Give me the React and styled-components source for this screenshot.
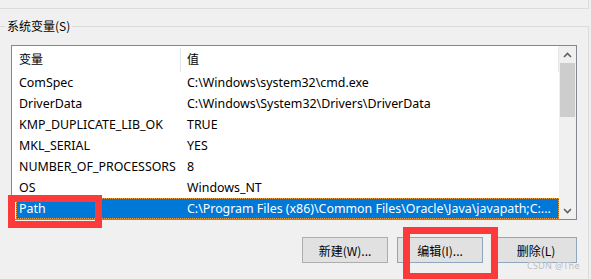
import React from "react";
import styled, { createGlobalStyle } from "styled-components";

const GlobalStyle = createGlobalStyle`
  html, body {
    margin: 0;
    padding: 0;
    background: #f0f0f0;
  }
  body {
    font-family: "Noto Sans", "Noto Sans CJK SC", sans-serif;
    font-size: 12px;
    color: #000;
  }
`;

const Page = styled.div`
  position: relative;
  width: 591px;
  height: 279px;
  overflow: hidden;
  background: #f0f0f0;
`;

const UpperBox = styled.div`
  width: 588px;
  height: 8px;
  border-right: 1px solid #dcdcdc;
  border-bottom: 1px solid #dcdcdc;
`;

const Group = styled.div`
  position: relative;
  margin-top: 17px;
  width: 589px;
  height: 260px;
  border-top: 1px solid #dcdcdc;
  border-right: 1px solid #dcdcdc;
  padding: 18px 0 0 11px;
  box-sizing: border-box;
  display: flex;
  flex-direction: column;
`;

const Legend = styled.span`
  position: absolute;
  left: 5px;
  top: -10px;
  padding: 0 2px;
  background: #f0f0f0;
  line-height: 18px;
  font-family: "Noto Sans CJK SC", sans-serif;
`;

const ListBox = styled.div`
  width: 566px;
  height: 175px;
  box-sizing: border-box;
  border: 1px solid #828790;
  background: #fff;
  display: flex;
`;

const ListBody = styled.div`
  flex: 1;
  padding-left: 4px;
  display: flex;
  flex-direction: column;
  font-size: 12.4px;
`;

const HeaderRow = styled.div`
  display: grid;
  grid-template-columns: 165px 1fr;
  height: 25px;
  align-items: center;
  border-right: 1px solid #e5e5e5;
  margin-top: 1px;
  font-family: "Noto Sans CJK SC", sans-serif;
  font-size: 12px;
`;

const HeaderCell = styled.div`
  height: 24px;
  line-height: 22px;
  padding-left: ${(p) => (p.$first ? "3px" : "6px")};
  border-right: ${(p) => (p.$first ? "1px solid #e5e5e5" : "none")};
`;

const Row = styled.div`
  display: grid;
  grid-template-columns: 165px 1fr;
  height: 21px;
  line-height: 20px;
  box-sizing: border-box;
  background: ${(p) => (p.$selected ? "#0078d7" : "transparent")};
  color: ${(p) => (p.$selected ? "#fff" : "#000")};
  border: 1px dotted ${(p) => (p.$selected ? "#f3a54a" : "transparent")};
`;

const Cell = styled.div`
  padding-left: ${(p) => (p.$first ? "2px" : "5px")};
  white-space: nowrap;
  overflow: hidden;
`;

const ScrollBar = styled.div`
  width: 17px;
  background: #f0f0f0;
  display: flex;
  flex-direction: column;
  align-items: center;
`;

const ArrowBtn = styled.div`
  height: 17px;
  width: 17px;
  display: flex;
  align-items: center;
  justify-content: center;
`;

const Thumb = styled.div`
  width: 15px;
  height: 54px;
  background: #cdcdcd;
`;

const Track = styled.div`
  flex: 1;
`;

const ButtonRow = styled.div`
  display: flex;
  justify-content: flex-end;
  width: 566px;
  margin-top: 17px;
`;

const Button = styled.div`
  width: ${(p) => p.$w}px;
  height: 26px;
  box-sizing: border-box;
  margin-left: ${(p) => p.$gap}px;
  border: 1px solid ${(p) => (p.$blue ? "#8fa6bf" : "#adadad")};
  background: #e1e1e1;
  display: flex;
  align-items: center;
  justify-content: center;
  font-family: "Noto Sans CJK SC", sans-serif;
`;

const RedBox = styled.div`
  position: absolute;
  left: ${(p) => p.$x}px;
  top: ${(p) => p.$y}px;
  width: ${(p) => p.$w}px;
  height: ${(p) => p.$h}px;
  box-sizing: border-box;
  border: 7px solid #fc3a3a;
`;

const Watermark = styled.span`
  position: absolute;
  left: 527px;
  top: 259px;
  font-size: 9px;
  color: #b8b8b8;
  letter-spacing: 0.3px;
  text-shadow: 0 0 1px #fff;
`;

const Chevron = ({ down }) => (
  <svg width="9" height="6" viewBox="0 0 9 6">
    <polyline
      points={down ? "1,1 4.5,4.5 8,1" : "1,5 4.5,1.5 8,5"}
      fill="none"
      stroke="#606060"
      strokeWidth="1.6"
    />
  </svg>
);

const vars = [
  ["ComSpec", "C:\\Windows\\system32\\cmd.exe"],
  ["DriverData", "C:\\Windows\\System32\\Drivers\\DriverData"],
  ["KMP_DUPLICATE_LIB_OK", "TRUE"],
  ["MKL_SERIAL", "YES"],
  ["NUMBER_OF_PROCESSORS", "8"],
  ["OS", "Windows_NT"],
  ["Path", "C:\\Program Files (x86)\\Common Files\\Oracle\\Java\\javapath;C:..."],
];

export default function App() {
  return (
    <Page>
      <GlobalStyle />
      <UpperBox />
      <Group>
        <Legend>系统变量(S)</Legend>
        <ListBox>
          <ListBody>
            <HeaderRow>
              <HeaderCell $first>变量</HeaderCell>
              <HeaderCell>值</HeaderCell>
            </HeaderRow>
            {vars.map(([name, value]) => (
              <Row key={name} $selected={name === "Path"}>
                <Cell $first>{name}</Cell>
                <Cell>{value}</Cell>
              </Row>
            ))}
          </ListBody>
          <ScrollBar>
            <ArrowBtn>
              <Chevron />
            </ArrowBtn>
            <Thumb />
            <Track />
            <ArrowBtn>
              <Chevron down />
            </ArrowBtn>
          </ScrollBar>
        </ListBox>
        <ButtonRow>
          <Button $w={86} $gap={0}>新建(W)...</Button>
          <Button $w={86} $gap={9} $blue>编辑(I)...</Button>
          <Button $w={82} $gap={12} $blue>删除(L)</Button>
        </ButtonRow>
      </Group>
      <RedBox $x={8} $y={195} $w={94} $h={33} />
      <RedBox $x={403} $y={227} $w={95} $h={53} />
      <Watermark>CSDN @The</Watermark>
    </Page>
  );
}
